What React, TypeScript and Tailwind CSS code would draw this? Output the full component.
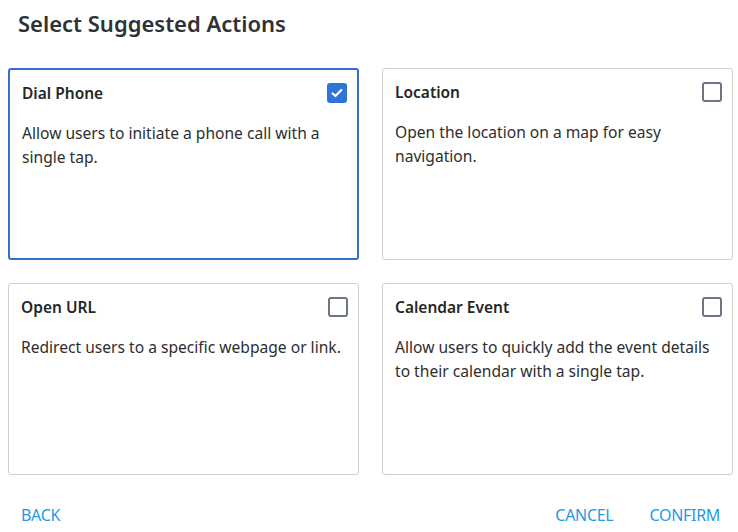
import React, { useState } from "react";

const actions = [
  { id: "dial", title: "Dial Phone", desc: "Allow users to initiate a phone call with a single tap." },
  { id: "location", title: "Location", desc: "Open the location on a map for easy navigation." },
  { id: "url", title: "Open URL", desc: "Redirect users to a specific webpage or link." },
  {
    id: "calendar",
    title: "Calendar Event",
    desc: "Allow users to quickly add the event details to their calendar with a single tap.",
  },
];

function Checkbox({ checked }: { checked: boolean }) {
  if (checked) {
    return (
      <span className="flex h-5 w-5 items-center justify-center rounded-[3px] bg-[#2f74d8]">
        <svg viewBox="0 0 16 16" className="h-[14px] w-[14px]" fill="none">
          <path d="M3 8.5l3.2 3L13 4.5" stroke="white" strokeWidth="2.4" strokeLinecap="round" strokeLinejoin="round" />
        </svg>
      </span>
    );
  }
  return <span className="block h-5 w-5 rounded-[3px] border-2 border-[#6b7785] bg-white" />;
}

export default function App() {
  const [selected, setSelected] = useState<string[]>(["dial"]);

  const toggle = (id: string) =>
    setSelected((s) => (s.includes(id) ? s.filter((i) => i !== id) : [...s, id]));

  return (
    <div className="flex h-[532px] w-[738px] flex-col bg-white font-['Noto_Sans',sans-serif]">
      <h1 className="px-[18px] pt-[7px] text-[22px] leading-[32px] font-semibold text-[#2f3237]">
        Select Suggested Actions
      </h1>
      <div className="mt-[29px] grid grid-cols-2 gap-[23px] pl-[8px] pr-[5px]">
        {actions.map((a) => {
          const on = selected.includes(a.id);
          return (
            <button
              key={a.id}
              onClick={() => toggle(a.id)}
              className={`flex h-[192px] flex-col rounded-[3px] bg-white pt-[13px] pl-[12px] text-left ${
                on ? "border-2 border-[#2f6fcf] pr-[10px]" : "border border-[#cfcfcf] pr-[10px]"
              }`}
            >
              <div className="flex items-start justify-between">
                <span className="text-[15.5px] leading-[20px] font-semibold text-[#262626]">{a.title}</span>
                <Checkbox checked={on} />
              </div>
              <p className="mt-[18px] text-[15.6px] leading-[24px] text-[#2e2e2e]">{a.desc}</p>
            </button>
          );
        })}
      </div>
      <div className="mt-auto flex items-center justify-between pb-[5px] pl-[21px] pr-[18px] text-[16px] leading-[24px] tracking-[-0.3px] text-[#1f9ae0] [font-stretch:condensed]">
        <span>BACK</span>
        <div className="flex gap-[36px]">
          <span>CANCEL</span>
          <span>CONFIRM</span>
        </div>
      </div>
    </div>
  );
}
